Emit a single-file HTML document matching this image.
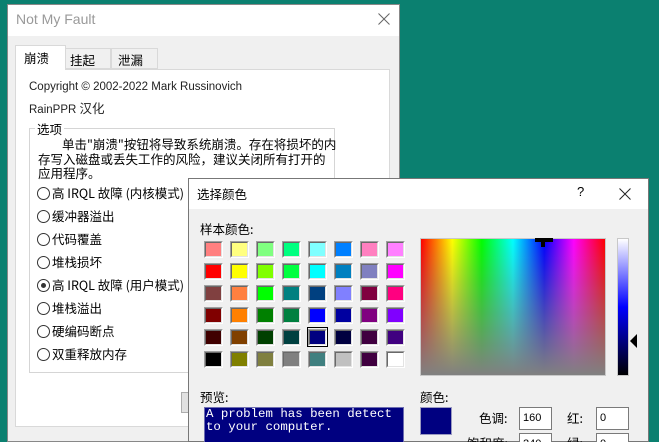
<!DOCTYPE html>
<html><head><meta charset="utf-8"><style>
*{margin:0;padding:0;box-sizing:border-box}
html,body{width:659px;height:442px;overflow:hidden}
body{background:#0b8070;position:relative;font-family:"Liberation Sans","Noto Sans CJK SC",sans-serif;font-size:12px;color:#000}
.a{position:absolute}
.cj{font-family:"Noto Sans CJK SC","Liberation Sans",sans-serif}
.sw{position:absolute;width:19px;height:17px;border:1px solid #a0a0a0;border-right-color:#fff;border-bottom-color:#fff}
.sw i{display:block;width:100%;height:100%;border:1px solid #696969;border-right-color:#e3e3e3;border-bottom-color:#e3e3e3}
.rb{position:absolute;left:37px;font-size:12.5px;line-height:16px}
.rb b{display:inline-block;width:13px;height:13px;border:1px solid #333;border-radius:50%;vertical-align:-2px;margin-right:2px;position:relative;background:#fff}
.rb b.on:after{content:"";position:absolute;left:3px;top:3px;width:5px;height:5px;border-radius:50%;background:#333}
.inp{position:absolute;height:23px;border:1px solid #7a7a7a;background:#fff;font-size:11px;padding:4px 0 0 3px}
</style></head><body>
<div class="a" style="left:7px;top:4px;width:393px;height:438px;background:#f0f0f0;border:1px solid #888"></div>
<div class="a" style="left:8px;top:5px;width:391px;height:31px;background:#fff"></div>
<div class="a" style="left:16px;top:11px;font-size:14px;color:#999">Not My Fault</div>
<svg class="a" style="left:378px;top:13px" width="12" height="12"><path d="M0.5 0.5L11.5 11.5M11.5 0.5L0.5 11.5" stroke="#666" stroke-width="1"/></svg>
<div class="a" style="left:15px;top:69px;width:375px;height:358px;background:#fff;border:1px solid #d9d9d9"></div>
<div class="a cj" style="left:15px;top:45px;width:51px;height:25px;background:#fff;border:1px solid #d9d9d9;border-bottom:none;padding:2px 0 0 8px;font-size:12.5px">崩溃</div>
<div class="a cj" style="left:65px;top:48px;width:46px;height:21px;background:#f0f0f0;border:1px solid #d9d9d9;padding:1px 0 0 4px;font-size:12.5px">挂起</div>
<div class="a cj" style="left:111px;top:48px;width:47px;height:21px;background:#f0f0f0;border:1px solid #d9d9d9;padding:1px 0 0 6px;font-size:12.5px">泄漏</div>
<div class="a" style="left:29px;top:81px;font-size:11.5px;color:#222">Copyright © 2002-2022 Mark Russinovich</div>
<div class="a" style="left:29px;top:98px;font-size:11.5px;color:#222">RainPPR <span class="cj" style="font-size:12.5px">汉化</span></div>
<div class="a" style="left:29px;top:128px;width:306px;height:245px;border:1px solid #d5d5d5"></div>
<div class="a cj" style="left:35px;top:119px;background:#fff;padding:0 2px;font-size:12.5px">选项</div>
<div class="a cj" style="left:38px;top:137px;font-size:12.5px;line-height:14.5px;white-space:nowrap"><span style="padding-left:24px"></span>单击"崩溃"按钮将导致系统崩溃。存在将损坏的内<br>存写入磁盘或丢失工作的风险，建议关闭所有打开的<br>应用程序。</div>
<div class="rb cj" style="top:185px"><b></b>高 IRQL 故障 (内核模式)</div>
<div class="rb cj" style="top:208px"><b></b>缓冲器溢出</div>
<div class="rb cj" style="top:231px"><b></b>代码覆盖</div>
<div class="rb cj" style="top:254px"><b></b>堆栈损坏</div>
<div class="rb cj" style="top:277px"><b class="on"></b>高 IRQL 故障 (用户模式)</div>
<div class="rb cj" style="top:300px"><b></b>堆栈溢出</div>
<div class="rb cj" style="top:323px"><b></b>硬编码断点</div>
<div class="rb cj" style="top:346px"><b></b>双重释放内存</div>
<div class="a" style="left:181px;top:392px;width:10px;height:21px;background:#e1e1e1;border:1px solid #adadad"></div>
<div class="a" style="left:188px;top:178px;width:461px;height:264px;background:#f0f0f0;border:1px solid #777"></div>
<div class="a" style="left:189px;top:179px;width:459px;height:30px;background:#fff"></div>
<div class="a cj" style="left:197px;top:184px;font-size:12.5px">选择颜色</div>
<div class="a" style="left:577px;top:184px;font-size:13px">?</div>
<svg class="a" style="left:619px;top:188px" width="12" height="12"><path d="M0.5 0.5L11.5 11.5M11.5 0.5L0.5 11.5" stroke="#222" stroke-width="1"/></svg>
<div class="a cj" style="left:200px;top:219px;font-size:12.5px">样本颜色:</div>
<div id="sw"></div>
<div class="a" style="left:307px;top:327px;width:21px;height:20px;border:1px solid #000"></div>
<div class="a" style="left:420px;top:238px;width:186px;height:138px;border:1px solid #c8c8c8;background:linear-gradient(to bottom,rgba(128,128,128,0),#808080),linear-gradient(to right,#f00,#ff0 17%,#0f0 33%,#0ff 50%,#00f 67%,#f0f 83%,#f00)"></div>
<div class="a" style="left:535px;top:238px;width:18px;height:4px;background:#000"></div>
<div class="a" style="left:541px;top:242px;width:4px;height:5px;background:#000"></div>
<div class="a" style="left:617px;top:238px;width:12px;height:138px;border:1px solid #c8c8c8;background:linear-gradient(#fff,#00f 50%,#000)"></div>
<div class="a" style="left:630px;top:334px;width:0;height:0;border-top:7px solid transparent;border-bottom:7px solid transparent;border-right:7px solid #000"></div>
<div class="a cj" style="left:200px;top:387px;font-size:12.5px">预览:</div>
<div class="a" style="left:204px;top:407px;width:200px;height:35px;background:#000080;color:#fff;font-family:'Liberation Mono',monospace;font-size:12.4px;line-height:13px;padding:0 0 0 1px;overflow:hidden;white-space:pre;border:1px solid #6c6cb0;border-bottom:none">A problem has been detect
to your computer.</div>
<div class="a cj" style="left:420px;top:387px;font-size:12.5px">颜色:</div>
<div class="a" style="left:420px;top:407px;width:32px;height:28px;background:#000080;border:1px solid #9a9ac0"></div>
<div class="a cj" style="left:479px;top:408px;font-size:12.5px">色调:</div>
<div class="inp" style="left:519px;top:407px;width:33px">160</div>
<div class="a cj" style="left:567px;top:408px;font-size:12.5px">红:</div>
<div class="inp" style="left:596px;top:407px;width:33px">0</div>
<div class="a cj" style="left:467px;top:433px;font-size:12.5px">饱和度:</div>
<div class="inp" style="left:519px;top:433px;width:33px">240</div>
<div class="a cj" style="left:567px;top:433px;font-size:12.5px">绿:</div>
<div class="inp" style="left:596px;top:433px;width:33px">0</div>
<script>
var c=["#ff8080","#ffff80","#80ff80","#00ff80","#80ffff","#0080ff","#ff80c0","#ff80ff",
"#ff0000","#ffff00","#80ff00","#00ff40","#00ffff","#0080c0","#8080c0","#ff00ff",
"#804040","#ff8040","#00ff00","#008080","#004080","#8080ff","#800040","#ff0080",
"#800000","#ff8000","#008000","#008040","#0000ff","#0000a0","#800080","#8000ff",
"#400000","#804000","#004000","#004040","#000080","#000040","#400040","#400080",
"#000000","#808000","#808040","#808080","#408080","#c0c0c0","#400040","#ffffff"];
var h="";for(var i=0;i<48;i++){var r=Math.floor(i/8),k=i%8;h+='<div class="sw" style="left:'+(204+k*26)+'px;top:'+(241+r*22)+'px"><i style="background:'+c[i]+'"></i></div>';}
document.getElementById("sw").innerHTML=h;
</script>
</body></html>
